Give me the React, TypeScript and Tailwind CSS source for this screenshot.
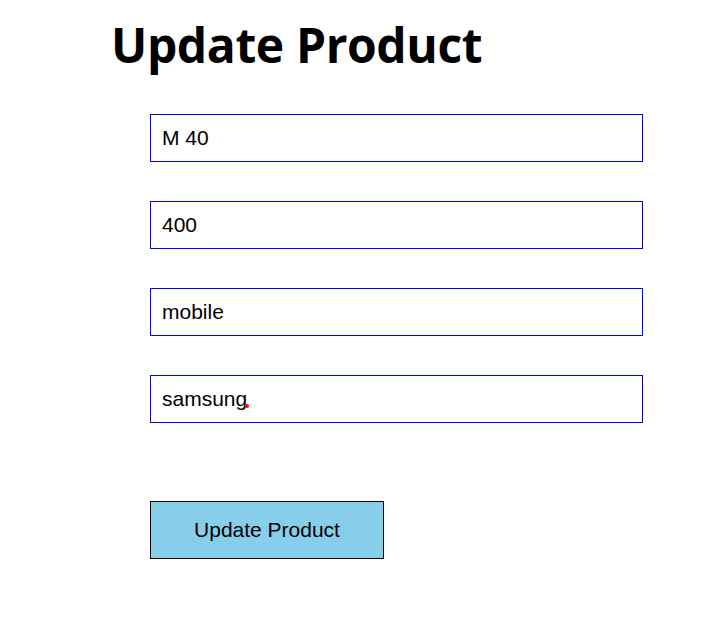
import { useState } from 'react'

export default function App() {
  const [form, setForm] = useState({
    name: 'M 40',
    price: '400',
    category: 'mobile',
    company: 'samsung',
  })

  const fields: (keyof typeof form)[] = ['name', 'price', 'category', 'company']

  return (
    <div className="min-h-[642px] w-[712px] bg-white">
      <h1 className="pl-[111px] pt-[13px] text-[48px] leading-[64px] font-bold text-black [font-family:'Segoe_UI','Open_Sans',sans-serif] tracking-[-0.4px]">
        Update Product
      </h1>

      <div className="mt-[37px] ml-[150px] flex w-[493px] flex-col gap-[39px] [font-family:'Liberation_Sans',Arial,sans-serif]">
        {fields.map((f) => (
          <div key={f} className="relative">
            <input
              type="text"
              value={form[f]}
              onChange={(e) => setForm({ ...form, [f]: e.target.value })}
              className="block h-[48px] w-full border border-[#0000ff] px-[11px] text-[21px] text-black outline-none"
            />
            {f === 'company' && (
              <span className="absolute left-[95px] top-[29px] h-[4px] w-[4px] rounded-full bg-[#ff0000]" />
            )}
          </div>
        ))}

        <button className="mt-[39px] h-[58px] w-[234px] border border-black bg-[#87ceeb] text-[21px] text-black">
          Update Product
        </button>
      </div>
    </div>
  )
}
